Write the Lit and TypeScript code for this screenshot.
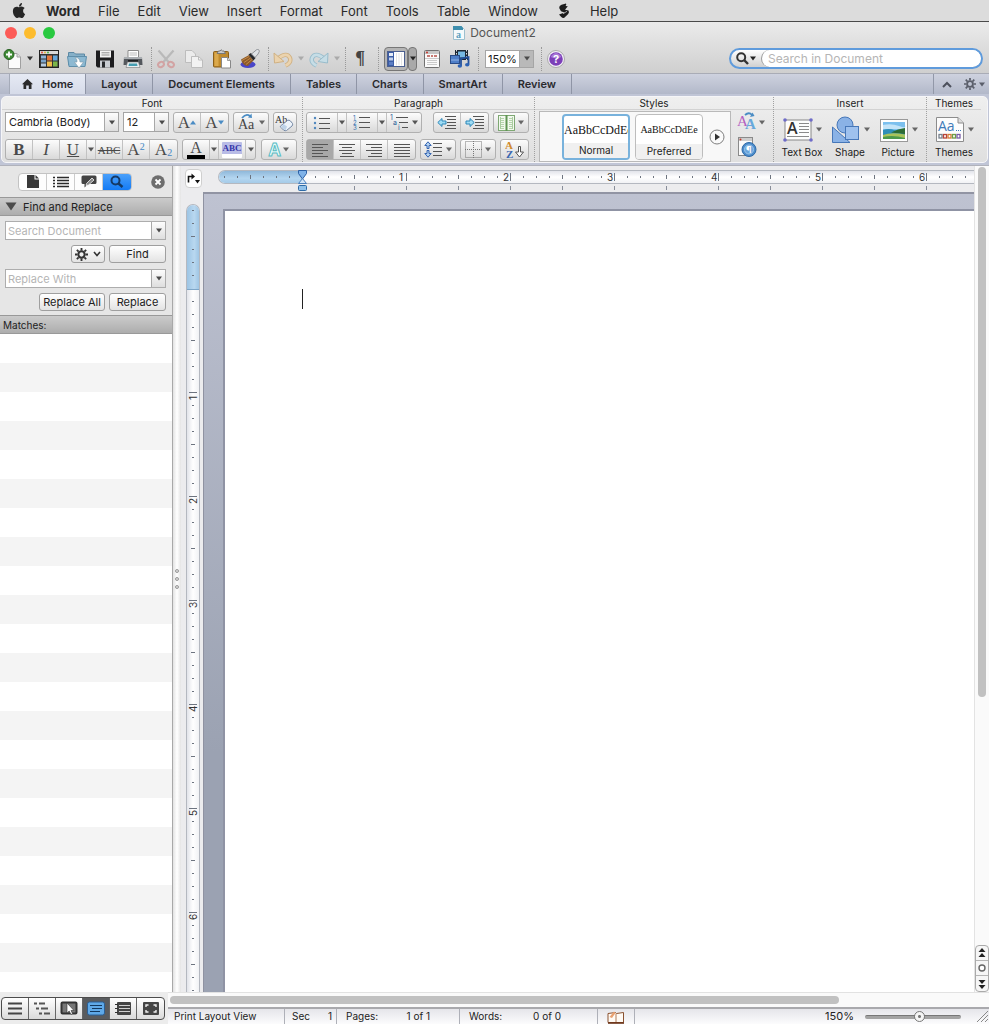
import { LitElement, html, css, svg, nothing } from "lit";
import { customElement, property } from "lit/decorators.js";

const SERIF = "Liberation Serif, serif";
const INCH = 104;
const EIGHTH = 13;

const icon = (w: number, h: number, body: unknown) =>
  html`<svg width=${w} height=${h} viewBox="0 0 ${w} ${h}" aria-hidden="true">${body}</svg>`;

const caret = (fill = "#4a4a4a") => icon(6, 5, svg`<path d="M0 0.5H6L3 4.5Z" fill=${fill}/>`);

const lines = (rows: number[][], color = "#555", width = 1) =>
  rows.map(([x1, x2, y]) => svg`<path d="M${x1} ${y}H${x2}" stroke=${color} stroke-width=${width}/>`);

const gear = (size: number, color: string) => html`<svg width=${size} height=${size} viewBox="0 0 14 14" aria-hidden="true">
  <circle cx="7" cy="7" r="3.4" fill="none" stroke=${color} stroke-width="2.2"/>
  <path d="M7 0V2.6M7 11.4V14M0 7H2.6M11.4 7H14M2 2L3.9 3.9M10.1 10.1L12 12M12 2L10.1 3.9M3.9 10.1L2 12" stroke=${color} stroke-width="2"/>
</svg>`;

const icons = {
  apple: html`<svg width="14" height="15" viewBox="1 0 22 24" aria-hidden="true"><path fill="#262626" d="M12.152 6.896c-.948 0-2.415-1.078-3.96-1.04-2.04.027-3.91 1.183-4.961 3.014-2.117 3.675-.546 9.103 1.519 12.09 1.013 1.454 2.208 3.09 3.792 3.039 1.52-.065 2.09-.987 3.935-.987 1.831 0 2.35.987 3.96.948 1.637-.026 2.676-1.48 3.676-2.948 1.156-1.688 1.636-3.325 1.662-3.415-.039-.013-3.182-1.221-3.22-4.857-.026-3.04 2.48-4.494 2.597-4.559-1.429-2.09-3.623-2.324-4.39-2.376-2-.156-3.675 1.09-4.61 1.09zM15.53 3.83c.843-1.012 1.4-2.427 1.245-3.83-1.207.052-2.662.805-3.532 1.818-.78.896-1.454 2.338-1.273 3.714 1.338.104 2.715-.688 3.559-1.701"/></svg>`,
  script: icon(12, 16, svg`<path d="M1.2 5Q1 2.5 3.500 1.800L8 0.500Q8.800 1.800 7.500 3L9.800 3.300L7 6.800L10.500 7.600Q11.600 9.200 10.200 11L6 15Q4 15 2.800 13.400L1 11.500L4.500 10.200L7 9.700L3 8.200Z" fill="#1d1d1d"/><path d="M5 10.800L9 8.300" stroke="#dcdcdc" stroke-width="0.7"/>`),
  docTitle: icon(12, 14, svg`<path d="M0.5 0.5H8.5L11.5 3.5V13.5H0.5Z" fill="#f4fafc" stroke="#9cc0cf"/><path d="M0 0H8.5L10 2V4H0Z" fill="#3f8fae"/><text x="3" y="12" font-size="10" font-family=${SERIF} font-weight="bold" fill="#5a9fc0">a</text>`),
  newDoc: icon(20, 20, svg`<path d="M6.5 4.5H14L17.5 8V19.5H5.5V4.5Z" fill="#fbfbfb" stroke="#a0a0a0"/><path d="M14 4.5V8H17.5" fill="#ddd" stroke="#a0a0a0"/><circle cx="6" cy="5.5" r="5" fill="#3f8a35" stroke="#255f20"/><path d="M6 2.5V8.5M3 5.5H9" stroke="#fff" stroke-width="1.8"/>`),
  gallery: icon(20, 20, svg`<rect x="0.5" y="1.5" width="19" height="17" fill="#343434" stroke="#222"/><rect x="1" y="2" width="18" height="3" fill="#d9d9d9"/><circle cx="3" cy="3.5" r="1" fill="#e04e3d"/><circle cx="6" cy="3.5" r="1" fill="#e2b33b"/><circle cx="9" cy="3.5" r="1" fill="#4fae45"/><rect x="2" y="6.5" width="5" height="3" fill="#8fb4d8"/><rect x="2" y="10.5" width="5" height="3" fill="#7aa4cc"/><rect x="2" y="14.5" width="5" height="3" fill="#b6cbe0"/><rect x="8" y="6.5" width="5" height="5" fill="#e2763e"/><rect x="14" y="6.5" width="4.5" height="5" fill="#64a7dd"/><rect x="8" y="12.5" width="5" height="5" fill="#f3bc4c"/><rect x="14" y="12.5" width="4.5" height="5" fill="#7bb64a"/>`),
  open: icon(20, 20, svg`<path d="M1.5 16V3.5H7L8.5 5H17.5V8" fill="#86b0c8" stroke="#5c88a3"/><path d="M0.5 7.5H19.5L18 17.5H2Z" fill="#8db9d2" stroke="#5f8fab"/><path d="M8 8Q13 9 13 13H16.500L12 19L7.500 13H10Q10.500 10.500 8 8Z" fill="#fff" stroke="#7e99a8" stroke-width="0.6"/>`),
  save: icon(20, 20, svg`<path d="M1 1.5H19V18.5H2.5L1 17Z" fill="#1d1d1f"/><rect x="5" y="1.5" width="11" height="7" fill="#f3f3f3"/><path d="M6.5 3.8H14.5M6.5 6H14.5" stroke="#8f8f8f"/><rect x="5" y="11.5" width="10" height="7" fill="#c9cdd2"/><rect x="7" y="12.5" width="3" height="6" fill="#27292c"/>`),
  print: icon(20, 20, svg`<path d="M5 1.5H15.5V9H5Z" fill="#fff" stroke="#8b8b8b"/><path d="M6.5 4H14M6.5 6H14" stroke="#bbb"/><path d="M1 8.5H19L19.5 16H0.5Z" fill="#54585d"/><rect x="1" y="8" width="18" height="2" fill="#a9adb1"/><rect x="5" y="11" width="10" height="3" fill="#1e2022"/><path d="M4.5 13H15.5L17 18.5H3Z" fill="#eceff1" stroke="#777" stroke-width="0.6"/><path d="M6 14.5H14L14.5 17H5.5Z" fill="#469eb1"/>`),
  cut: icon(20, 20, svg`<path d="M2.5 1.5L13 13.5M17.5 1.5L7 13.5" stroke="#b9b9b9" stroke-width="2.2"/><ellipse cx="5" cy="15.5" rx="3" ry="2.5" fill="none" stroke="#d2a3a3" stroke-width="2" transform="rotate(-25 5 15.5)"/><ellipse cx="15" cy="15.5" rx="3" ry="2.5" fill="none" stroke="#d2a3a3" stroke-width="2" transform="rotate(25 15 15.5)"/>`),
  copy: icon(20, 20, svg`<path d="M1.5 1.5H8L11.5 5V13.5H1.5Z" fill="#ececec" stroke="#bdbdbd"/><path d="M7.5 7.5H14.5L18.5 11V18.5H7.5Z" fill="#f2f2f2" stroke="#bdbdbd"/><path d="M14.5 7.5V11H18.5" fill="none" stroke="#bdbdbd"/>`),
  paste: icon(20, 20, svg`<rect x="1.5" y="2.5" width="15" height="15.5" rx="1" fill="#c08a2c" stroke="#8a5f1a"/><rect x="2.5" y="3.5" width="4" height="13.5" fill="#dba94c"/><path d="M5 4.5L6.5 2H8Q9 -0.5 10.5 2H12L13.5 4.5Z" fill="#c9c9c9" stroke="#777"/><path d="M9.5 8.5H15.5L18.5 11.5V19H9.5Z" fill="#fff" stroke="#888"/><path d="M15.5 8.5V11.5H18.5" fill="#ddd" stroke="#888" stroke-width="0.8"/>`),
  brush: icon(20, 20, svg`<ellipse cx="8" cy="15.5" rx="7.5" ry="3.5" fill="#4a46c8"/><path d="M1 10.5L9 6L13.5 11.5L8 17Q3 17.5 1 10.5Z" fill="#8d5a2a"/><path d="M2 11.5L9 7.5M4 13.5L10.5 9M6 15.5L12 10.5" stroke="#c99048" stroke-width="0.9"/><path d="M8.5 5.5L11 4L15.5 9L13.5 11.5Z" fill="#26282c"/><path d="M11.5 5L16.5 0.8Q19 -0.5 19.3 2.5Q19 4.5 15 8.5Z" fill="#dfe2e6" stroke="#7c8087" stroke-width="0.8"/>`),
  undo: icon(20, 20, svg`<path d="M5 9.5Q14 2.5 17 9Q18.5 14 12.5 16.5" fill="none" stroke="#d0b183" stroke-width="4.4"/><path d="M5 9.5Q14 2.5 17 9Q18.5 14 12.5 16.5" fill="none" stroke="#ebd3ae" stroke-width="2.6"/><path d="M1 4L1.5 14L11 12.5Z" fill="#ebd3ae" stroke="#d0b183"/>`),
  redo: icon(20, 20, svg`<path d="M15 9.5Q6 2.5 3 9Q1.5 14 7.5 16.5" fill="none" stroke="#98bccb" stroke-width="4.4"/><path d="M15 9.5Q6 2.5 3 9Q1.5 14 7.5 16.5" fill="none" stroke="#c6dde6" stroke-width="2.6"/><path d="M19 4L18.5 14L9 12.5Z" fill="#c6dde6" stroke="#98bccb"/>`),
  sidebar: icon(18, 18, svg`<rect x="0.5" y="1.5" width="17" height="15" fill="#fff" stroke="#4b5f8f"/><rect x="1" y="2" width="6" height="14" fill="#3b5da6"/><rect x="2" y="3" width="4" height="3" fill="#e7edf8"/><rect x="2" y="7.5" width="4" height="3" fill="#c2d0ea"/><rect x="2" y="12" width="4" height="3" fill="#5d7fc4"/><path d="M9.5 3V15.5M12 3V15.5M14.5 3V15.5" stroke="#e4e4e4"/>`),
  toolbox: icon(16, 18, svg`<rect x="0.5" y="0.5" width="15" height="17" rx="1" fill="#fafafa" stroke="#707070"/><rect x="1" y="1" width="14" height="3" fill="#c7c7c7"/><circle cx="3" cy="2.5" r="1" fill="#c5382c"/><path d="M3 6H6M7 6H9M10 6H13" stroke="#b85048" stroke-width="1.5"/><path d="M1 8.5H15M3 10.5H13M3 12.5H13M3 14.5H13" stroke="#cacaca"/>`),
  media: icon(20, 20, svg`<rect x="5" y="1" width="13" height="10" fill="#1d2733"/><rect x="8" y="2.5" width="7" height="6" fill="#76b8e2"/><path d="M6.5 1V11M16.5 1V11" stroke="#d7dde3" stroke-dasharray="1.5 1.5"/><rect x="0.5" y="6.5" width="9" height="8" fill="#4f7fc8" stroke="#2a4c88"/><path d="M1 11H9" stroke="#8fb2e4"/><path d="M11 17V9.5L18.5 8V15.5" fill="none" stroke="#23509b" stroke-width="1.8"/><ellipse cx="9.8" cy="17" rx="2.2" ry="1.7" fill="#2d62b5"/><ellipse cx="17.2" cy="15.8" rx="2.2" ry="1.7" fill="#2d62b5"/>`),
  help: icon(18, 18, svg`<circle cx="9" cy="9" r="8.5" fill="#f3f0f8" stroke="#aaa"/><circle cx="9" cy="9" r="6.8" fill="#7c3fb8"/><path d="M3.5 7Q9 -1 14.5 7Q9 9.5 3.5 7Z" fill="#a877d6"/><text x="9" y="13" text-anchor="middle" font-size="11" font-weight="bold" font-family="Inter, sans-serif" fill="#fff">?</text>`),
  search: icon(13, 13, svg`<circle cx="5.2" cy="5.2" r="4" fill="none" stroke="#333" stroke-width="2"/><path d="M8.2 8.2L12 12" stroke="#333" stroke-width="2.4"/>`),
  home: icon(11, 10, svg`<path d="M5.5 0L11 5.2H9.5V10H6.8V6.5H4.2V10H1.5V5.2H0Z" fill="#2b2b2b"/>`),
  up: icon(10, 7, svg`<path d="M1 6L5 2L9 6" fill="none" stroke="#4c505c" stroke-width="2"/>`),
  bullets: icon(18, 14, svg`${[2, 7, 12].map((y) => svg`<circle cx="2" cy=${y} r="1.2" fill="#4f87be"/>`)}${lines([[6, 17, 2.5], [6, 17, 7.5], [6, 17, 12.5]])}`),
  numbers: icon(18, 17, svg`${[1, 2, 3].map((n) => svg`<text x="0" y=${n * 5 + 1} font-size="6" font-family="Inter, sans-serif" fill="#2f6fae">${n}</text>`)}${lines([[6, 17, 3.5], [6, 17, 8.5], [6, 17, 13.5]])}`),
  outline: icon(19, 17, svg`<g font-size="7" font-family="Inter, sans-serif" fill="#2f5f98"><text x="0" y="6">1</text><text x="3" y="11">a</text><text x="8" y="16">i</text></g>${lines([[6, 18, 3.5], [9, 18, 8.5], [12, 18, 13.5]])}`),
  outdent: icon(20, 15, svg`${lines([[8, 19, 1.5], [10, 19, 4.5], [10, 19, 7.5], [10, 19, 10.5], [8, 19, 13.5]])}<path d="M0.8 7.5L5 3.5V6H9V9H5V11.5Z" fill="#9fdcf4" stroke="#2b86b8"/>`),
  indent: icon(20, 15, svg`${lines([[8, 19, 1.5], [10, 19, 4.5], [10, 19, 7.5], [10, 19, 10.5], [8, 19, 13.5]])}<path d="M9.2 7.5L5 3.5V6H1V9H5V11.5Z" fill="#9fdcf4" stroke="#2b86b8"/>`),
  columns: icon(17, 16, svg`<rect x="0.5" y="0.5" width="16" height="15" fill="#f2f8ee" stroke="#7ea873"/><path d="M8.5 0V16" stroke="#5f9453" stroke-width="2"/><path d="M2.5 2V14M14.5 2V14" stroke="#a9cc9f"/>${[3, 5, 7, 9, 11, 13].map((y) => svg`<path d="M3 ${y}.5H6M11 ${y}.5H14" stroke="#b5d3ac"/>`)}`),
  left: icon(16, 14, lines([[0, 16, 1.5], [0, 11, 4.5], [0, 16, 7.5], [0, 11, 10.5], [0, 16, 13.5]])),
  center: icon(16, 14, lines([[0, 16, 1.5], [3, 13, 4.5], [0, 16, 7.5], [3, 13, 10.5], [1, 15, 13.5]])),
  right: icon(16, 14, lines([[0, 16, 1.5], [5, 16, 4.5], [0, 16, 7.5], [5, 16, 10.5], [2, 16, 13.5]])),
  justify: icon(16, 14, lines([[0, 16, 1.5], [0, 16, 4.5], [0, 16, 7.5], [0, 16, 10.5], [0, 16, 13.5]])),
  spacing: icon(19, 17, svg`${lines([[9, 18, 2.5], [9, 18, 6.5], [9, 18, 10.5], [9, 18, 14.5]])}<path d="M4 0.800L7.200 4.500H5V7.500H3V4.500H0.800ZM4 16.200L7.200 12.500H5V9.500H3V12.500H0.800Z" fill="#b7d4f2" stroke="#3666b2"/>`),
  borders: icon(17, 17, svg`<path d="M0.5 0.5H16.5V16.5H0.5ZM8.5 0V17M0 8.5H17" fill="none" stroke="#777" stroke-dasharray="1 1"/>`),
  sort: icon(20, 20, svg`<text x="0" y="9" font-size="11" font-weight="bold" font-family=${SERIF} fill="#d08a2c">A</text><text x="1" y="18" font-size="11" font-weight="bold" font-family=${SERIF} fill="#3a66b0">Z</text><path d="M13.500 6.5H15.500V12H18.5L14.5 17L10.5 12H13.500Z" fill="#fff" stroke="#555"/>`),
  changeCase: icon(18, 19, svg`<text x="0" y="16" font-size="14" font-family=${SERIF} fill="#444">Aa</text><path d="M4 5Q8 0 12 3" fill="none" stroke="#4a8cc4" stroke-width="1.8"/><path d="M10 4.5L14 5L13.5 0.5Z" fill="#4a8cc4"/>`),
  clear: icon(20, 19, svg`<text x="0" y="10" font-size="10" font-family=${SERIF} fill="#333">Ab</text><path d="M5.5 13L12.5 7.5Q14 6.5 15.5 8L17.5 10.5Q18 12 17 13L11.5 17.5Q10 18.3 8.5 17L6 14.5Q5 13.7 5.5 13Z" fill="#edf3fa" stroke="#7588a4"/><path d="M6 14L10.5 17.5L12 13.5L8.5 11Z" fill="#bed2e8"/>`),
  changeStyles: icon(20, 20, svg`<text x="0" y="14" font-size="15" font-family=${SERIF} fill="#b45fc0">A</text><text x="8" y="17" font-size="15" font-weight="bold" font-family=${SERIF} fill="#67a8dc">A</text><path d="M8 3Q12 -0.5 15 3" fill="none" stroke="#4a8cc4" stroke-width="1.8"/><path d="M13 5L17.5 4L15.5 0.5Z" fill="#4a8cc4"/>`),
  stylePane: icon(20, 20, svg`<rect x="1.5" y="0.5" width="14" height="18" fill="#fafafa" stroke="#8a8a8a"/><rect x="2" y="1" width="13" height="3" fill="#cecece"/><circle cx="3.5" cy="2.5" r="1" fill="#c5382c"/><circle cx="12" cy="12.5" r="7" fill="#4d8dcc" stroke="#2e6aa8"/><circle cx="12" cy="12.5" r="4.5" fill="#6ba5dc" stroke="#9cc6ea"/><text x="9" y="16" font-size="9" font-weight="bold" font-family="Inter, sans-serif" fill="#fff">¶</text>`),
  textBox: icon(30, 26, svg`<rect x="2" y="3" width="26" height="20" fill="#fdfdfd" stroke="#888"/><text x="4" y="17" font-size="16" font-weight="600" font-family="Open Sans, sans-serif" fill="#333">A</text>${lines([[16, 26, 6.5], [16, 26, 9.5], [16, 26, 12.5], [16, 26, 15.5], [4, 26, 19.5]], "#8a8a8a")}${[[2, 3], [28, 3], [2, 23], [28, 23]].map(([x, y]) => svg`<circle cx=${x} cy=${y} r="1.8" fill="#6e6cc8"/>`)}`),
  shape: icon(30, 28, svg`<circle cx="14" cy="9" r="8" fill="#8ab2e6" stroke="#4777b8"/><path d="M1.5 11V26.5H19Z" fill="#8ab2e6" stroke="#4777b8"/><rect x="14.5" y="10.5" width="13" height="13" fill="#9ec1ee" stroke="#4777b8"/>`),
  picture: icon(30, 26, svg`<rect x="1.5" y="2.5" width="27" height="22" fill="#fff" stroke="#999"/><rect x="4" y="5" width="22" height="17" fill="#7cc0ee"/><path d="M4 8Q12 6 20 9T26 8V12H4Z" fill="#c4e4f8"/><path d="M4 13Q10 11 15 13T26 12V22H4Z" fill="#2f8fb8"/><path d="M26 11L19 12.5L12 15.5L26 17Z" fill="#2d6d34"/><path d="M4 18Q12 15 26 17.5V22H4Z" fill="#a9c45a"/><path d="M4 20Q14 17.5 26 21V22H4Z" fill="#4d9a4a"/>`),
  themes: icon(30, 27, svg`<path d="M1.5 1.5H23L28.5 7V25.5H1.5Z" fill="#fcfcfc" stroke="#8c8c8c"/><path d="M23 1.5V7H28.5" fill="#ddd" stroke="#8c8c8c"/><text x="3" y="15" font-size="14" font-family="Open Sans, sans-serif" fill="#3f7ab8">Aa</text><path d="M21 14.5H26" stroke="#3f7ab8" stroke-dasharray="1 1"/>${["#77818e", "#b8443a", "#d47a34", "#6d9c46", "#7a5da8"].map((c, i) => svg`<rect x=${4 + i * 4.5} y="18.5" width="3" height="3.5" fill="#fff" stroke=${c} stroke-width="1.3"/>`)}`),
  next: icon(16, 16, svg`<circle cx="8" cy="8" r="7" fill="#fafafa" stroke="#7f7f7f"/><path d="M6 4.5V11.5L11 8Z" fill="#333"/>`),
  page: icon(12, 13, svg`<path d="M0 0H7.5V4.5H12V13H0Z" fill="#383838"/><path d="M8.5 0L12 3.5H8.5Z" fill="#383838"/>`),
  list: icon(16, 12, svg`${[1, 4, 7, 10].map((y) => svg`<path d="M0 ${y}.5H2M4 ${y}.5H16" stroke="#2b2b2b" stroke-width="1.4"/>`)}`),
  comment: icon(16, 13, svg`<path d="M2 0.500H14Q15.500 0.500 15.500 2V7.500Q15.500 9 14 9H7L3.500 12.500V9H2Q0.500 9 0.500 7.500V2Q0.500 0.500 2 0.500Z" fill="#444"/><path d="M5.500 8.500L11 3L13 5L7.500 10L5 10.500Z" fill="#888" stroke="#f4f4f4" stroke-width="0.8"/>`),
  find: icon(14, 13, svg`<circle cx="5.5" cy="5.5" r="4" fill="none" stroke="#153a66" stroke-width="2"/><path d="M8.5 8.5L12.5 12" stroke="#153a66" stroke-width="2.4"/>`),
  close: icon(14, 14, svg`<circle cx="7" cy="7" r="6.8" fill="#6e6e6e"/><path d="M4.5 4.5L9.5 9.5M9.5 4.5L4.5 9.5" stroke="#fff" stroke-width="1.8"/>`),
  chevron: icon(8, 6, svg`<path d="M1 1L4 4.5L7 1" fill="none" stroke="#333" stroke-width="1.6"/>`),
  disclosure: icon(12, 9, svg`<path d="M0.5 0.5H11.5L6 8.5Z" fill="#4b4b4b"/>`),
  tabStop: icon(15, 12, svg`<path d="M2.5 9.5V3.5H6" fill="none" stroke="#111" stroke-width="1.6"/><path d="M5.5 0.5L9 3.5L5.5 6.5Z" fill="#111"/><path d="M9 7H14L11.5 10.5Z" fill="#111"/>`),
  book: icon(18, 14, svg`<path d="M1 3.5L8.5 2.5L9.5 3.5L16.5 2.5V12.5H1Z" fill="#fffaf4" stroke="#8b5230"/><path d="M9 3.5V12" stroke="#b07c58"/><path d="M1 13H17" stroke="#6b3418" stroke-width="1.6"/><path d="M2.5 7L7 1.500L8.500 3L5 8Z" fill="#e8a070"/>`),
  grip: icon(11, 11, svg`<path d="M0 11L11 0M4 11L11 4M8 11L11 8" stroke="#888"/>`),
};

const views = [
  { name: "Draft View", art: lines([[2, 16, 3.5], [2, 16, 8.5], [2, 16, 13.5]], "#444", 2) },
  { name: "Outline View", art: lines([[1, 4, 3.5], [6, 12, 3.5], [3, 6, 8.5], [8, 15, 8.5], [6, 9, 13.5], [11, 17, 13.5]], "#555", 2) },
  { name: "Publishing Layout View", art: svg`<rect x="1.5" y="2.5" width="15" height="11" rx="1" fill="#777" stroke="#333" stroke-width="2"/><path d="M7 3V13L9.2 11L11 14.5L12.5 13.5L11 10.5H14Z" fill="#fff" stroke="#333" stroke-width="0.6"/>` },
  { name: "Print Layout View", art: svg`<rect x="0.5" y="2" width="17" height="13" rx="2" fill="#5fa9e8" stroke="#2a5f95"/>${lines([[3, 15, 5.5], [5, 15, 8.5], [3, 13, 11.5]], "#12385f", 1)}`, on: true },
  { name: "Notebook Layout View", art: svg`<rect x="3" y="2" width="14" height="13" rx="1" fill="#444"/>${lines([[5, 16, 5.5], [5, 16, 8.5], [5, 16, 11.5]], "#d0d0d0")}<path d="M1 4.5H4M1 8.5H4M1 12.5H4" stroke="#333"/>` },
  { name: "Full Screen View", art: svg`<rect x="1" y="2" width="16" height="13" rx="1" fill="#444"/><path d="M4 7V5H6.5M11.5 5H14V7M14 10V12H11.5M6.5 12H4V10" fill="none" stroke="#eee" stroke-width="1.4"/>` },
];

@customElement("page-ruler")
class PageRuler extends LitElement {
  @property({ type: Boolean }) vertical = false;
  @property({ type: Number }) margin = 84;

  static styles = css`
    :host { display: block; overflow: hidden; position: relative; }
    .track {
      box-sizing: border-box; overflow: hidden; position: relative;
      border: 1px solid #b4b8c0; background: linear-gradient(#e2e4ea, #fff 50%, #f1f2f5);
      border-radius: 7px 0 0 7px; height: 14px; border-right: 0;
    }
    .track.v { width: 14px; height: 100%; border-radius: 7px 7px 0 0; border: 1px solid #b4b8c0; border-bottom: 0; background: linear-gradient(90deg, #e2e4ea, #fff 50%, #f1f2f5); }
    .margin { background: linear-gradient(#8fb8da, #b4d6f0 60%, #a5cbe8); height: 100%; }
    .v .margin { width: 100%; height: auto; background: linear-gradient(90deg, #9cc4e4, #b9d8f0 60%, #9fc5e4); border-bottom: 1px solid #7ea6c8; }
    .scale { position: absolute; inset: 0; display: block; }
    .num { font: 10px Inter, sans-serif; fill: #333; }
    .stops { display: block; width: 100%; height: 7px; }
    .indent { position: absolute; top: 0; left: 78px; }
  `;

  private marks() {
    const out = [];
    for (let i = -6; i < 80; i++) {
      const p = this.margin + i * EIGHTH - 1;
      const whole = i % 8 === 0;
      if (i === 0) continue;
      const half = i % 4 === 0;
      const [a, b] = whole && i > 0 ? [2, 10] : half ? [4, 8] : [5, 7];
      out.push(this.vertical
        ? svg`<path d="M${a} ${p}.5H${b}" stroke="#6d7480"/>`
        : svg`<path d="M${p}.5 ${a}V${b}" stroke="#6d7480"/>`);
      if (whole && i > 0) {
        out.push(this.vertical
          ? svg`<text class="num" transform="translate(10 ${p + 8}) rotate(-90)">${i / 8}</text>`
          : svg`<text class="num" x=${p - 7} y="10">${i / 8}</text>`);
      }
    }
    return out;
  }

  render() {
    const size = `${this.vertical ? "height" : "width"}:${this.margin}px`;
    return html`
      <div class="track ${this.vertical ? "v" : ""}">
        <div class="margin" style=${size}></div>
        <svg class="scale" width="100%" height="100%">${this.marks()}</svg>
      </div>
      ${this.vertical ? nothing : html`
        <svg class="stops">${Array.from({ length: 30 }, (_, i) => svg`<path d="M${this.margin + ((i + 1) * INCH) / 2}.5 2V6" stroke="#888e9a"/>`)}</svg>
        <svg class="indent" width="12" height="22">
          <path d="M2.5 0.5H10.5V3.5L6.5 9L2.5 3.5Z" fill="#7fb2e8" stroke="#2d61a6"/>
          <path d="M6.5 8.5L10.5 13.5H2.5Z" fill="#cfe4f7" stroke="#4a80bd"/>
          <rect x="2.5" y="15.5" width="8" height="5" rx="1" fill="#8fc1ea" stroke="#2d6aa6"/>
        </svg>`}`;
  }
}

@customElement("app-root")
class AppRoot extends LitElement {
  static styles = css`
    :host { display: flex; flex-direction: column; height: 100vh; overflow: hidden; font: 11px/14px Inter, "Open Sans", sans-serif; color: #222; background: #e8e8e8; }
    * { box-sizing: border-box; }
    svg { display: block; flex: none; }
    button { font: inherit; color: inherit; border: 0; background: none; padding: 0; margin: 0; display: flex; align-items: center; justify-content: center; }
    input, select { font: inherit; color: inherit; min-width: 0; margin: 0; border: 0; background: none; padding: 0; outline: 0; border-radius: 0; }
    select { appearance: none; }
    ::placeholder { color: #b5b5b5; opacity: 1; }

    .menubar { display: flex; align-items: center; gap: 18px; height: 22px; padding-left: 12px; background: #dcdcdc; border-bottom: 1px solid #4a4a4a; font-size: 13px; flex: none; }
    .menubar button { color: #2a2a2a; }
    .menubar .app { font-weight: 700; padding-left: 2px; }
    .menubar .glyph { padding: 0 2px; }

    .chrome { background: linear-gradient(#ebebeb, #cfcfcf); flex: none; border-radius: 4px 4px 0 0; }
    .titlebar { display: grid; grid-template-columns: 1fr auto 1fr; align-items: center; height: 22px; padding: 0 5px; }
    .lights { display: flex; gap: 7px; }
    .light { width: 12px; height: 12px; border-radius: 50%; background: #fc5b57; }
    .light.min { background: #fdbc2e; }
    .light.max { background: #29c940; }
    .title { display: flex; gap: 5px; align-items: center; font-size: 12px; color: #555; }
    .toolbar { display: flex; align-items: center; height: 29px; padding: 0 6px 0 1px; }
    .tool { width: 28px; height: 24px; flex: none; }
    .tool.new { width: 24px; }
    .drop { width: 8px; height: 24px; flex: none; }
    .drop.wide { width: 10px; }
    .sep { width: 5px; height: 24px; border-right: 1px dotted #999; flex: none; }
    .toggle { width: 24px; height: 24px; margin-left: 5px; border: 1px solid #777; border-radius: 4px; background: #b5b5b5; flex: none; }
    .toggle.thin { width: 9px; margin: 0 1px 0 0; background: #a9a9a9; }
    .pilcrow { font: bold 18px "Liberation Serif", serif; color: #444; }
    .pick { display: grid; grid-template-columns: 1fr 14px; background: #fff; border: 1px solid #a5a5a5; height: 20px; flex: none; }
    .pick select { grid-area: 1 / 1 / 2 / 3; padding-left: 3px; font-size: 11px; }
    .pick .arrow { grid-area: 1 / 2; pointer-events: none; }
    .arrow { display: flex; align-items: center; justify-content: center; background: linear-gradient(#fdfdfd, #dedede); border-left: 1px solid #a8a8a8; }
    .zoom { width: 49px; height: 18px; margin: 0 3px 0 6px; }
    .zoom .arrow { background: #b9b9b9; }
    .zoom select { padding-left: 2px; }
    .search { display: flex; align-items: center; width: 254px; height: 21px; margin-left: auto; border: 2px solid #5f9bdc; border-radius: 11px; background: linear-gradient(#fff, #d0d0d0); overflow: hidden; }
    .search button { width: 30px; gap: 1px; flex: none; }
    .search input { flex: 1; height: 100%; border-radius: 9px; background: #fff; border-left: 1px solid #999; padding-left: 6px; font-size: 12px; }

    .tabs { display: flex; height: 21px; padding-left: 9px; background: linear-gradient(#ced2df, #b2b8c9); border-top: 1px solid #a9acb6; font-weight: 600; flex: none; }
    .tabs button { padding: 0 15px; border-right: 1px solid #8f95a6; color: #2a2a2e; gap: 9px; }
    .tabs .on { background: linear-gradient(#e6eaf4, #d6dbe9); padding: 0 12px; border-left: 1px solid #a5abb9; }
    .tabs .end { border: 0; margin-left: auto; border-left: 1px solid #9298a8; padding: 0 4px 0 8px; gap: 3px; }
    .tabs .end.more { margin: 0; border: 0; }

    .ribbon { background: #c0c5d6; padding: 2px 1px 3px; border-bottom: 1px solid #b0b2bb; height: 72px; flex: none; }
    .groups { display: flex; height: 67px; border-radius: 5px; background: linear-gradient(#efefef, #dfdfdf); border: 1px solid #f5f5f8; }
    .group { display: flex; flex-direction: column; flex: none; border-right: 1px dotted #a0a0a0; }
    .group:last-child { border: 0; padding-right: 6px; }
    .group h2 { margin: 0; height: 13px; font: 10px/13px Inter, sans-serif; text-align: center; border-bottom: 1px solid #d2d2d2; }
    .group.grow { flex: 1; }
    .rows { display: flex; flex-direction: column; gap: 6px; padding: 2px 5px 0 3px; }
    .row { display: flex; gap: 4px; height: 21px; }
    .cell { display: flex; border: 1px solid #b0b0b0; border-radius: 3px; background: linear-gradient(#fcfcfc, #d9d9d9); flex: none; }
    .cell button { width: 27px; border-right: 1px solid #c2c2c2; gap: 3px; font-family: "Liberation Serif", serif; font-size: 17px; color: #4a4a4a; }
    .cell button:last-child { border-right: 0; }
    .cell .arr { width: 9px; border-right: 1px solid #c2c2c2; }
    .cell .menu { width: 34px; border: 0; }
    .cell .num { width: 31px; }
    .cell .sq { width: 22px; }
    .cell .on { background: #a8a8a8; }
    .push { margin-left: auto; }
    .fontname { width: 114px; }
    .fontsize { width: 46px; }
    .bold { font-weight: 700; }
    .ital { font-style: italic; }
    .under { text-decoration: underline; }
    .cell .strike { font-size: 11px; text-decoration: line-through; }
    .small { font-size: 10px; color: #3f86c4; align-self: flex-start; line-height: 14px; }
    .small.low { align-self: flex-end; line-height: 12px; }
    .cell .tight { gap: 0; }
    .ink { border-bottom: 4px solid #000; line-height: 14px; padding: 0 3px; font-size: 16px; }
    .hi { border-bottom: 4px solid #fff; font: bold 9px/12px "Liberation Serif", serif; color: #3434a8; background: #b9bce6; border-radius: 1px; }
    .glow { font: 700 17px/18px "Open Sans", sans-serif; color: #e9fbfb; -webkit-text-stroke: 1px #58bcc4; }

    .stylebody { display: flex; height: 52px; margin: 1px 0 0 4px; gap: 6px; }
    .gallery { display: flex; flex: 1; align-items: center; justify-content: flex-end; gap: 5px; background: #f8f8f8; border: 1px solid #b9b9b9; padding-right: 5px; }
    .card { width: 68px; height: 46px; flex-direction: column; align-items: stretch; border: 1px solid #bdbdbd; border-radius: 4px; background: #fff; overflow: hidden; justify-content: flex-end; font-size: 10px; }
    .card.on { border: 2px solid #78b2dc; }
    .sample { font: 10px/28px "Liberation Serif", serif; white-space: nowrap; overflow: hidden; color: #111; }
    .card.on .sample { font-size: 12px; line-height: 26px; }
    .cap { background: #f0f0f0; line-height: 15px; }
    .more { margin-left: 1px; }
    .styletools { display: flex; flex-direction: column; gap: 5px; width: 36px; align-items: flex-start; padding-top: 1px; }
    .styletools button { gap: 2px; }
    .bigs { display: flex; padding: 5px 4px 0; }
    .big { flex-direction: column; width: 48px; font-size: 10px; gap: 1px; }
    .big .art { display: flex; align-items: center; gap: 3px; height: 29px; }
    .bigs.one { padding: 5px 0 0; }
    .bigs.one .big { width: 54px; }

    .main { display: flex; flex: 1; min-height: 0; }
    .side { display: flex; flex-direction: column; width: 173px; border-right: 1px solid #a8a8a8; flex: none; background: #e6e6e6; }
    .sidetabs { display: flex; align-items: center; height: 31px; padding: 0 7px 0 18px; justify-content: space-between; }
    .seg { display: flex; height: 18px; border: 1px solid #c3c3c3; border-radius: 4px; background: #fdfdfd; overflow: hidden; }
    .seg button { width: 28px; border-right: 1px solid #ccc; }
    .seg .on { background: linear-gradient(#4aa0fa, #147bf5); border: 0; }
    .bar { display: flex; align-items: center; gap: 6px; height: 19px; padding: 0 5px; margin: 0; font: 11px/14px Inter, sans-serif; background: linear-gradient(#cbcbcb, #adadad); border: solid #999; border-width: 1px 0; flex: none; }
    .bar.plain { padding: 0 3px; font-size: 10px; }
    .panel { display: flex; flex-direction: column; gap: 5px; padding: 5px 6px 3px 5px; }
    .field { display: grid; grid-template-columns: 1fr 14px; height: 19px; background: #fff; border: 1px solid #adadad; }
    .field input { padding-left: 2px; font-size: 11px; }
    .acts { display: flex; justify-content: flex-end; gap: 4px; height: 19px; padding-bottom: 1px; }
    .push-btn { height: 18px; border: 1px solid #9f9f9f; border-radius: 3px; background: linear-gradient(#fff, #e3e3e3); font-size: 11px; gap: 5px; min-width: 34px; }
    .push-btn.mid { width: 57px; }
    .push-btn.wide { width: 66px; }
    .matches { flex: 1; background: repeating-linear-gradient(#fff 0 29px, #f4f4f4 29px 58px); }
    .split { width: 8px; background: linear-gradient(90deg, #e2e2e2, #fff 50%, #e4e4e4); display: flex; flex-direction: column; justify-content: center; align-items: center; gap: 4px; flex: none; }
    .split i { width: 4px; height: 4px; border-radius: 50%; border: 1px solid #999; background: #ddd; }

    .work { display: grid; grid-template: 26px 1fr / 22px 1fr; flex: 1; min-width: 0; background: #ececee; }
    .corner { margin: 3px 1px 4px 4px; background: #fff; border: 1px solid #cfcfcf; border-radius: 4px; }
    .h { margin: 4px 0 0 15px; }
    .v { margin: 12px 3px 0 5px; }
    .desk { display: flex; background: linear-gradient(#bec2d1, #9ba2b2 70%); padding: 15px 0 0 19px; border-top: 2px solid #9194a3; border-left: 1px solid #8f92a1; }
    .sheet { flex: 1; background: #fff; border: solid #8f93a4; border-width: 2px 0 0 2px; padding: 78px; outline: 0; }
    .cursor { display: block; width: 1px; height: 20px; background: #222; margin-left: -1px; }
    .vscroll { width: 15px; background: #fafafa; border-left: 1px solid #e3e3e3; display: flex; flex-direction: column; justify-content: space-between; align-items: center; flex: none; padding-top: 1px; }
    .vthumb { width: 8px; height: 64.2%; border-radius: 4px; background: #c1c1c1; }
    .jump { display: flex; flex-direction: column; width: 14px; border: 1px solid #aaa; border-radius: 4px; background: #f6f6f6; }
    .jump button { height: 15px; border-bottom: 1px solid #b5b5b5; }
    .jump button:last-child { border: 0; }

    .foot { display: flex; height: 32px; flex: none; background: #ececec; }
    .views { display: flex; margin: 5px 3px 4px 1px; border: 1px solid #4d4d4d; border-radius: 4px; overflow: hidden; background: linear-gradient(#fff, #dadada); flex: none; }
    .views button { width: 27px; border-right: 1px solid #666; }
    .views button:last-child { border: 0; }
    .views .on { background: #595b5e; }
    .lower { flex: 1; display: flex; flex-direction: column; }
    .hscroll { height: 15px; background: #fafafa; border-top: 1px solid #e2e2e2; padding: 3px 15px 0 2px; }
    .hthumb { width: 83.2%; height: 8px; border-radius: 4px; background: #c1c1c1; }
    .status { display: flex; align-items: stretch; height: 17px; border-top: 2px solid #a9a9ad; background: linear-gradient(#e5e5ea, #fcfcfd); font-size: 10px; line-height: 15px; }
    .item { display: flex; justify-content: space-between; border-right: 1px solid #aeb0b8; padding: 0 9px; }
    .item.view { width: 117px; padding: 0 6px; }
    .item.sec { width: 52px; padding: 0 4px 0 7px; }
    .item.pages { width: 123px; padding-right: 29px; }
    .item.words { width: 138px; padding-right: 36px; }
    .zoomer { margin-left: auto; display: flex; align-items: center; gap: 11px; font-size: 11px; padding-right: 1px; }
    .zoomer svg { margin-left: 5px; }
    .slider { appearance: none; width: 96px; height: 12px; }
    .slider::-webkit-slider-runnable-track { height: 4px; background: #a3a3a3; border-radius: 2px; border-top: 1px solid #777; }
    .slider::-webkit-slider-thumb { appearance: none; width: 11px; height: 11px; margin-top: -5px; border-radius: 50%; border: 1px solid #777; background: radial-gradient(#777 0 1px, #f5f5f5 2px); }
  `;

  private tool(name: string, art: unknown, cls = "tool") {
    return html`<button class=${cls} aria-label=${name}>${art}</button>`;
  }

  private pick(label: string, value: string, cls: string) {
    return html`<label class="pick ${cls}"><select aria-label=${label}><option>${value}</option></select><span class="arrow">${caret()}</span></label>`;
  }

  private field(label: string) {
    return html`<div class="field"><input type="text" placeholder=${label} aria-label=${label} /><button class="arrow" aria-label="${label} history">${caret()}</button></div>`;
  }

  private big(label: string, art: unknown) {
    return html`<button class="big"><span class="art">${art}${caret("#666")}</span><span>${label}</span></button>`;
  }

  private drop(name: string, color = "#4a4a4a", cls = "drop") {
    return html`<button class=${cls} aria-label="${name} options">${caret(color)}</button>`;
  }

  private menubar() {
    return html`<nav class="menubar" aria-label="Menu bar">
      <button aria-label="Apple">${icons.apple}</button><button class="app">Word</button>
      ${["File", "Edit", "View", "Insert", "Format", "Font", "Tools", "Table", "Window"].map((m) => html`<button>${m}</button>`)}
      <button class="glyph" aria-label="Scripts">${icons.script}</button><button>Help</button>
    </nav>`;
  }

  private chrome() {
    return html`<header class="chrome">
      <div class="titlebar">
        <div class="lights"><button class="light" aria-label="Close"></button><button class="light min" aria-label="Minimize"></button><button class="light max" aria-label="Full screen"></button></div>
        <div class="title">${icons.docTitle}<span>Document2</span></div>
      </div>
      <div class="toolbar">
        ${this.tool("New", icons.newDoc, "tool new")}${this.drop("New", "#333", "drop wide")}
        ${this.tool("Gallery", icons.gallery)}${this.tool("Open", icons.open)}${this.tool("Save", icons.save)}${this.tool("Print", icons.print)}
        <span class="sep"></span>
        ${this.tool("Cut", icons.cut)}${this.tool("Copy", icons.copy)}${this.tool("Paste", icons.paste)}${this.tool("Format painter", icons.brush)}
        <span class="sep"></span>
        ${this.tool("Undo", icons.undo)}${this.drop("Undo", "#aaa")}${this.tool("Redo", icons.redo)}${this.drop("Redo", "#aaa")}
        <span class="sep"></span>
        ${this.tool("Show paragraph marks", html`<span class="pilcrow">¶</span>`)}
        <span class="sep"></span>
        ${this.tool("Sidebar", icons.sidebar, "toggle")}${this.drop("Sidebar", "#222", "toggle thin")}
        ${this.tool("Toolbox", icons.toolbox)}${this.tool("Media", icons.media)}
        <span class="sep"></span>
        ${this.pick("Zoom", "150%", "zoom")}
        <span class="sep"></span>
        ${this.tool("Help", icons.help)}
        <div class="search"><button aria-label="Search options">${icons.search}${caret("#222")}</button><input type="search" placeholder="Search in Document" aria-label="Search in Document" /></div>
      </div>
    </header>
    <nav class="tabs" aria-label="Ribbon tabs">
      <button class="on">${icons.home}Home</button>
      ${["Layout", "Document Elements", "Tables", "Charts", "SmartArt", "Review"].map((t) => html`<button>${t}</button>`)}
      <button class="end" aria-label="Collapse ribbon">${icons.up}</button>
      <button class="end more" aria-label="Ribbon settings">${gear(12, "#5a5e6a")}${caret("#5a5e6a")}</button>
    </nav>`;
  }

  private ribbon() {
    const arr = (n: string) => html`<button class="arr" aria-label="${n} options">${caret("#555")}</button>`;
    return html`<section class="ribbon"><div class="groups">
      <section class="group"><h2>Font</h2><div class="rows">
        <div class="row">
          ${this.pick("Font", "Cambria (Body)", "fontname")}${this.pick("Font size", "12", "fontsize")}
          <div class="cell">
            <button class="tight" aria-label="Grow font">A${icon(6, 5, svg`<path d="M0 4.5H6L3 0.5Z" fill="#4a8cc4"/>`)}</button>
            <button class="tight" aria-label="Shrink font">A${caret("#4a8cc4")}</button>
          </div>
          <div class="cell"><button class="menu" aria-label="Change case">${icons.changeCase}${caret("#666")}</button></div>
          <div class="cell push"><button class="sq" aria-label="Clear formatting">${icons.clear}</button></div>
        </div>
        <div class="row">
          <div class="cell">
            <button class="bold">B</button><button class="ital">I</button><button class="under">U</button>${arr("Underline")}
            <button class="strike">ABC</button>
            <button class="tight" aria-label="Superscript">A<span class="small">2</span></button>
            <button class="tight" aria-label="Subscript">A<span class="small low">2</span></button>
          </div>
          <div class="cell">
            <button aria-label="Font color"><span class="ink">A</span></button>${arr("Font color")}
            <button aria-label="Highlight"><span class="hi">ABC</span></button>${arr("Highlight")}
          </div>
          <div class="cell push"><button class="menu" aria-label="Text effects"><span class="glow">A</span>${caret("#666")}</button></div>
        </div>
      </div></section>
      <section class="group"><h2>Paragraph</h2><div class="rows">
        <div class="row">
          <div class="cell">
            <button class="num" aria-label="Bullets">${icons.bullets}</button>${arr("Bullets")}
            <button class="num" aria-label="Numbering">${icons.numbers}</button>${arr("Numbering")}
            <button class="menu" aria-label="Multilevel list">${icons.outline}${caret("#555")}</button>
          </div>
          <div class="cell push"><button aria-label="Decrease indent">${icons.outdent}</button><button aria-label="Increase indent">${icons.indent}</button></div>
          <div class="cell"><button class="menu" aria-label="Columns">${icons.columns}${caret("#666")}</button></div>
        </div>
        <div class="row">
          <div class="cell"><button class="on" aria-label="Align left">${icons.left}</button><button aria-label="Center">${icons.center}</button><button aria-label="Align right">${icons.right}</button><button aria-label="Justify">${icons.justify}</button></div>
          <div class="cell"><button class="menu" aria-label="Line spacing">${icons.spacing}${caret("#666")}</button></div>
          <div class="cell"><button class="menu" aria-label="Borders">${icons.borders}${caret("#666")}</button></div>
          <div class="cell"><button aria-label="Sort">${icons.sort}</button></div>
        </div>
      </div></section>
      <section class="group grow"><h2>Styles</h2><div class="stylebody">
        <div class="gallery">
          <button class="card on"><span class="sample">AaBbCcDdEe</span><span class="cap">Normal</span></button>
          <button class="card"><span class="sample">AaBbCcDdEe</span><span class="cap">Preferred</span></button>
          <button class="more" aria-label="More styles">${icons.next}</button>
        </div>
        <div class="styletools"><button aria-label="Change styles">${icons.changeStyles}${caret("#666")}</button><button aria-label="Styles pane">${icons.stylePane}</button></div>
      </div></section>
      <section class="group"><h2>Insert</h2><div class="bigs">${this.big("Text Box", icons.textBox)}${this.big("Shape", icons.shape)}${this.big("Picture", icons.picture)}</div></section>
      <section class="group"><h2>Themes</h2><div class="bigs one">${this.big("Themes", icons.themes)}</div></section>
    </div></section>`;
  }

  private sidebar() {
    return html`<aside class="side">
      <div class="sidetabs">
        <div class="seg">
          ${this.tool("Thumbnails", icons.page, "")}${this.tool("Document map", icons.list, "")}${this.tool("Reviewing", icons.comment, "")}${this.tool("Search", icons.find, "on")}
        </div>
        <button aria-label="Close sidebar">${icons.close}</button>
      </div>
      <h2 class="bar">${icons.disclosure}Find and Replace</h2>
      <div class="panel">
        ${this.field("Search Document")}
        <div class="acts"><button class="push-btn" aria-label="Find options">${gear(13, "#333")}${icons.chevron}</button><button class="push-btn mid">Find</button></div>
        ${this.field("Replace With")}
        <div class="acts"><button class="push-btn wide">Replace All</button><button class="push-btn mid">Replace</button></div>
      </div>
      <h2 class="bar plain">Matches:</h2>
      <div class="matches"></div>
    </aside>`;
  }

  private footer() {
    return html`<footer class="foot">
      <div class="views">${views.map((v) => html`<button class=${v.on ? "on" : ""} aria-label=${v.name}>${icon(18, 17, v.art)}</button>`)}</div>
      <div class="lower">
        <div class="hscroll"><div class="hthumb"></div></div>
        <div class="status">
          <span class="item view">Print Layout View</span>
          <span class="item sec"><span>Sec</span><span>1</span></span>
          <span class="item pages"><span>Pages:</span><span>1 of 1</span></span>
          <span class="item words"><span>Words:</span><span>0 of 0</span></span>
          <button class="item" aria-label="Proofing">${icons.book}</button>
          <label class="zoomer">150%<input class="slider" type="range" min="0" max="100" value="58" />${icons.grip}</label>
        </div>
      </div>
    </footer>`;
  }

  render() {
    return html`
      ${this.menubar()}${this.chrome()}${this.ribbon()}
      <main class="main">
        ${this.sidebar()}
        <div class="split"><i></i><i></i><i></i></div>
        <div class="work">
          <button class="corner" aria-label="Tab stop">${icons.tabStop}</button>
          <page-ruler class="h"></page-ruler>
          <page-ruler class="v" vertical></page-ruler>
          <div class="desk"><div class="sheet" contenteditable="true" aria-label="Document"><span class="cursor"></span></div></div>
        </div>
        <div class="vscroll">
          <div class="vthumb"></div>
          <div class="jump">
            <button aria-label="Previous page">${icon(8, 10, svg`<path d="M4 0L7.5 4H0.5ZM4 5L7.5 9H0.5Z" fill="#222"/>`)}</button>
            <button aria-label="Browse object">${icon(8, 8, svg`<circle cx="4" cy="4" r="3" fill="#fff" stroke="#666" stroke-width="1.4"/>`)}</button>
            <button aria-label="Next page">${icon(8, 10, svg`<path d="M4 5L7.5 1H0.5ZM4 10L7.5 6H0.5Z" fill="#222"/>`)}</button>
          </div>
        </div>
      </main>
      ${this.footer()}`;
  }
}
